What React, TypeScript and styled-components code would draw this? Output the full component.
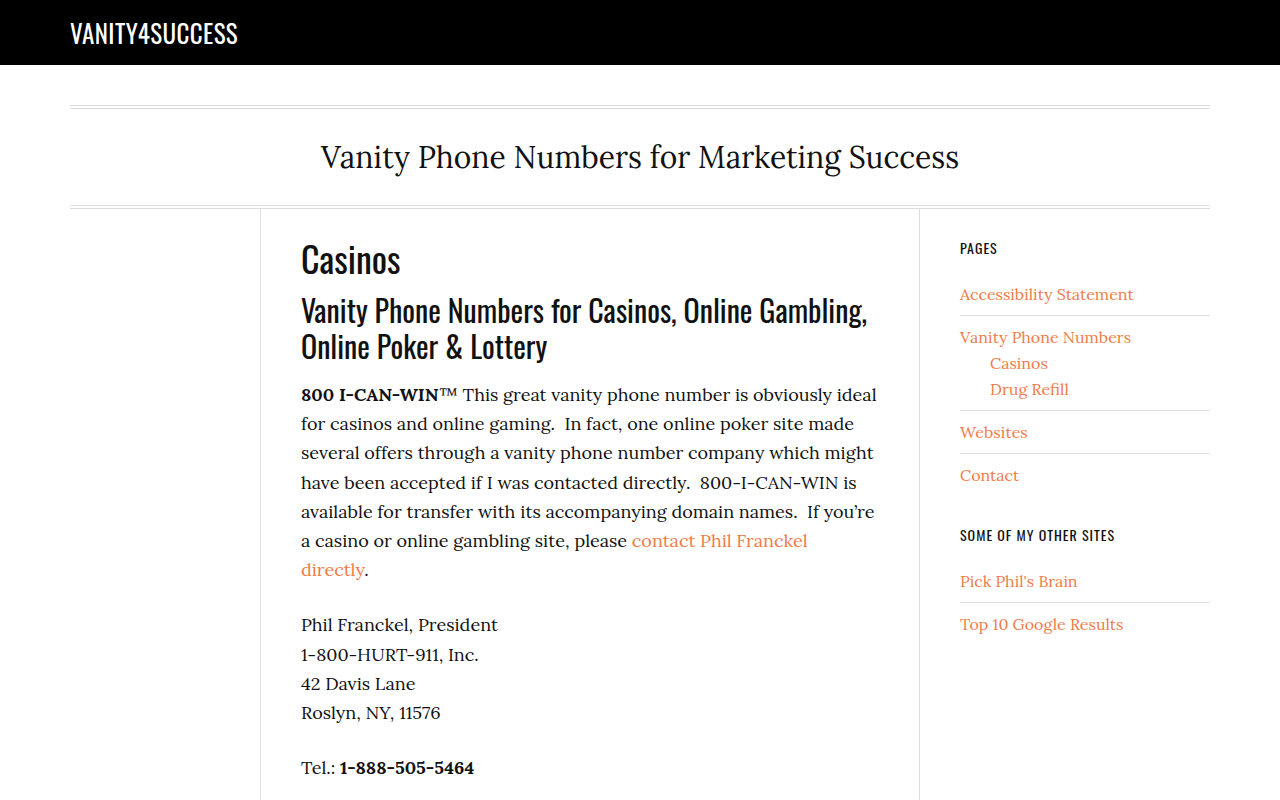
import styled, { createGlobalStyle } from "styled-components";

const heading = `"Oswald", "Noto Sans Display", "Liberation Sans", sans-serif`;
const body = `"Lora", "Liberation Serif", serif`;
const accent = "#f07b47";
const rule = "#dddddd";

const GlobalStyle = createGlobalStyle`
  html, body {
    margin: 0;
    padding: 0;
    background: #fff;
    color: #111;
    font-family: ${body};
  }
  a {
    color: ${accent};
    text-decoration: none;
  }
`;

const TopBar = styled.header`
  background: #000;
  height: 65px;
  display: flex;
  align-items: center;
  padding: 0 70px;
`;

const Logo = styled.a`
  color: #fff;
  font-family: ${heading};
  font-weight: 400;
  font-size: 25px;
  letter-spacing: 0.4px;
  text-transform: uppercase;
`;

const Wrapper = styled.div`
  max-width: 1140px;
  margin: 0 auto;
  padding-top: 40px;
`;

const TitleBox = styled.div`
  border-top: 4px double ${rule};
  border-bottom: 4px double ${rule};
  height: 96px;
  display: flex;
  align-items: center;
  justify-content: center;
`;

const SiteTitle = styled.h1`
  margin: 0;
  font-family: ${body};
  font-weight: 400;
  font-size: 30px;
  color: #111;
`;

const Columns = styled.div`
  display: grid;
  grid-template-columns: 191px 659px 1fr;
  min-height: 600px;
`;

const Spacer = styled.div`
  border-right: 1px solid ${rule};
`;

const Main = styled.main`
  border-right: 1px solid ${rule};
  padding: 23px 40px 0;
`;

const PageTitle = styled.h1`
  margin: 0 0 8px;
  font-family: ${heading};
  font-weight: 400;
  font-size: 36px;
  line-height: 52px;
`;

const SubTitle = styled.h2`
  margin: 0 0 16px;
  font-family: ${heading};
  font-weight: 400;
  font-size: 30px;
  line-height: 36px;
`;

const Para = styled.p`
  margin: 0 0 26px;
  font-size: 18px;
  line-height: 29.2px;
`;

const Sidebar = styled.aside`
  padding: 27px 0 0 40px;
`;

const Widget = styled.section`
  margin-bottom: 27px;
`;

const WidgetTitle = styled.h3`
  margin: 0 0 13px;
  font-family: ${heading};
  font-weight: 400;
  font-size: 14px;
  letter-spacing: 1px;
  text-transform: uppercase;
  line-height: 24px;
`;

const List = styled.ul`
  list-style: none;
  margin: 0;
  padding: 0;
`;

const Item = styled.li`
  border-bottom: 1px solid ${rule};
  padding: 8px 0 8px;
  font-size: 16px;
  line-height: 26px;
  &:last-child {
    border-bottom: none;
  }
`;

const SubList = styled.ul`
  list-style: none;
  margin: 0;
  padding: 0 0 0 30px;
`;

const SubItem = styled.li`
  font-size: 16px;
  line-height: 26px;
`;

export default function App() {
  return (
    <>
      <GlobalStyle />
      <TopBar>
        <Logo href="#">Vanity4Success</Logo>
      </TopBar>
      <Wrapper>
        <TitleBox>
          <SiteTitle>Vanity Phone Numbers for Marketing Success</SiteTitle>
        </TitleBox>
        <Columns>
          <Spacer />
          <Main>
            <PageTitle>Casinos</PageTitle>
            <SubTitle>
              Vanity Phone Numbers for Casinos, Online Gambling, Online Poker &amp; Lottery
            </SubTitle>
            <Para>
              <strong>800 I-CAN-WIN</strong>™ This great vanity phone number is obviously ideal
              for casinos and online gaming.&nbsp; In fact, one online poker site made several
              offers through a vanity phone number company which might have been accepted if I
              was contacted directly.&nbsp; 800-I-CAN-WIN is available for transfer with its
              accompanying domain names.&nbsp; If you’re a casino or online gambling site, please{" "}
              <a href="#">contact Phil Franckel directly</a>.
            </Para>
            <Para>
              Phil Franckel, President
              <br />
              1-800-HURT-911, Inc.
              <br />
              42 Davis Lane
              <br />
              Roslyn, NY, 11576
            </Para>
            <Para>
              Tel.: <strong>1-888-505-5464</strong>
            </Para>
          </Main>
          <Sidebar>
            <Widget>
              <WidgetTitle>Pages</WidgetTitle>
              <List>
                <Item>
                  <a href="#">Accessibility Statement</a>
                </Item>
                <Item>
                  <a href="#">Vanity Phone Numbers</a>
                  <SubList>
                    <SubItem>
                      <a href="#">Casinos</a>
                    </SubItem>
                    <SubItem>
                      <a href="#">Drug Refill</a>
                    </SubItem>
                  </SubList>
                </Item>
                <Item>
                  <a href="#">Websites</a>
                </Item>
                <Item>
                  <a href="#">Contact</a>
                </Item>
              </List>
            </Widget>
            <Widget>
              <WidgetTitle>Some of My Other Sites</WidgetTitle>
              <List>
                <Item>
                  <a href="#">Pick Phil's Brain</a>
                </Item>
                <Item>
                  <a href="#">Top 10 Google Results</a>
                </Item>
              </List>
            </Widget>
          </Sidebar>
        </Columns>
      </Wrapper>
    </>
  );
}
